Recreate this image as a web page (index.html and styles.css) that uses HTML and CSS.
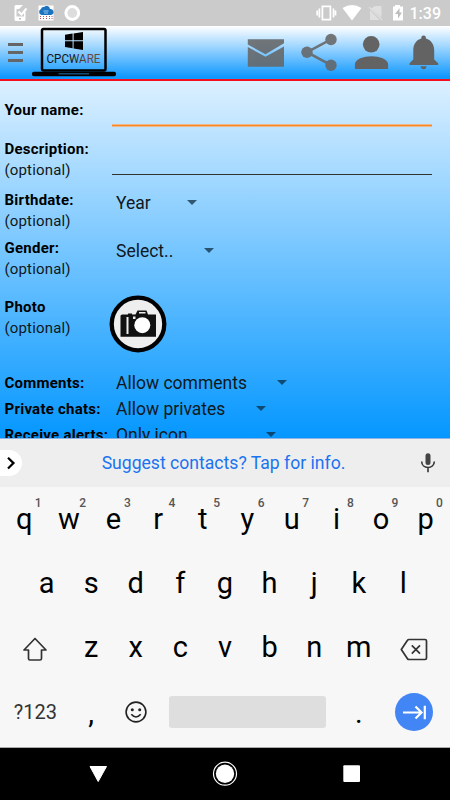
FILE: index.html
```html
<!DOCTYPE html>
<html lang="en">
<head>
<meta charset="utf-8">
<title>Profile</title>
<link rel="stylesheet" href="styles.css">
</head>
<body>
<div class="phone">
  <div class="status">
    <svg width="85" height="26" viewBox="0 0 85 26">
      <path fill="#fff" d="M16 5h7l-4 4h-2.500v7.500h7.500v-4l1.500-1.500v8.500q0 1.500-1.500 1.500h-8q-1.500 0-1.500-1.500v-13q0-1.500 1.500-1.500z"/>
      <path fill="none" stroke="#fff" stroke-width="2" d="M18.500 11.500l3 3 5-6"/>
      <path fill="#bbb" d="M19 18h2v1.500h-2z"/>
      <path fill="#fff" d="M38.500 5.500h15v15h-15z"/>
      <path fill="#1b73c0" d="M41.500 15a3.200 3.200 0 0 1-.5-6q.5-2.500 3-2a3.500 3.500 0 0 1 6 2 3 3 0 0 1 1 6z"/>
      <path stroke="#95c6e8" stroke-width="1" d="M43.500 11h5M44 13h4"/>
      <path fill="none" stroke="#b45b60" stroke-dasharray="1 1" d="M40.500 16v4M43.500 16v4M46.500 16v4M49.500 16v4M52 16v4"/>
      <circle cx="72.300" cy="13" r="6.400" fill="#ddd" stroke="#fff" stroke-width="3"/>
    </svg>
    <div class="status-right">
      <svg width="96" height="26" viewBox="312 0 96 26">
        <path fill="none" stroke="#fff" stroke-width="1.700" d="M322.400 6.400h8v13.200h-8zM319.400 8.500v9M317.200 10.500v5M333.500 8.500v9M335.500 10.500v5"/>
        <path fill="#fff" d="M342.500 8q9.500-6 19 0l-9.500 12.500z"/>
        <path fill="#dfdfdf" d="M375 6h6.500v11.500L371 8.500zM370 10l9.500 10H370z"/>
        <path stroke="#dfdfdf" stroke-width="1.300" d="M369 7l13 13"/>
        <path fill="#fff" d="M395 5h5v1.500h3v14H393v-14h2z"/>
        <path fill="#bdbdbd" d="M399.500 8l-4.500 6h3v4.500l4-6h-2.500z"/>
      </svg>
      <span class="clock">1:39</span>
    </div>
  </div>

  <header class="header">
    <div class="brand">
      <span class="burger"><i></i><i></i><i></i></span>
      <svg width="84" height="50" viewBox="32 27 84 50">
        <defs><linearGradient id="word"><stop offset=".45" stop-color="#151515"/><stop offset=".75" stop-color="#6b4a3c"/></linearGradient></defs>
        <rect x="42" y="29" width="63.500" height="41.500" rx="1.500" fill="none" stroke="#000" stroke-width="2.500"/>
        <path fill="#000" d="M65 34.800l7.600-1.200v6.700H65zM73.600 33.400l9.400-1.400v8.300h-9.400zM65 41.300h7.600V48.200L65 47zM73.600 41.300H83v8.600l-9.400-1.400z"/>
        <text class="logo-text" x="46.500" y="63.200" textLength="54" lengthAdjust="spacingAndGlyphs">CPCWARE</text>
        <rect x="32" y="71.700" width="84" height="4.600" rx="1.800"/>
        <rect x="58.500" y="73" width="30.500" height="1.500" fill="#164d72"/>
      </svg>
    </div>
    <svg width="202" height="52" viewBox="242 26 202 52">
      <g fill="#666" opacity=".88">
        <path d="M247.800 39.300H284v4L265.500 54.300 247.800 44.500zM247.800 47l17.700 9.800L284 46.500v20.300H247.800z"/>
        <path fill="none" stroke="#666" stroke-width="2.600" d="M331 39.300L307 52.200l24 13"/>
        <circle cx="331" cy="39.500" r="5.700"/><circle cx="307" cy="52.200" r="5.700"/><circle cx="331" cy="65.200" r="5.700"/>
      </g>
      <g fill="#636363">
        <circle cx="371.200" cy="44.300" r="8.300"/>
        <path d="M354.900 69v-4.500c0-5.500 9-8.300 16.600-8.300s16.600 2.800 16.600 8.300V69z"/>
        <path d="M409.500 65v-1.800l3.800-3.800v-9c0-6 3-10.500 8-11.800v-.8a2.300 2.300 0 0 1 4.600 0v.8c5 1.300 8.300 5.800 8.300 11.800v9l4 3.800V65zM420.500 66.200h6.200q-.5 3-3.100 3t-3.100-3z"/>
      </g>
    </svg>
  </header>

  <main class="form">
    <div class="row row-name"><div class="label"><b>Your name:</b></div><div class="input focus"></div></div>
    <div class="row row-desc"><div class="label"><b>Description:</b><span>(optional)</span></div><div class="input"></div></div>
    <div class="row row-birth"><div class="label"><b>Birthdate:</b><span>(optional)</span></div><div class="select w-year">Year<i class="caret"></i></div></div>
    <div class="row row-gender"><div class="label"><b>Gender:</b><span>(optional)</span></div><div class="select w-gender">Select..<i class="caret"></i></div></div>
    <div class="row row-photo"><div class="label"><b>Photo</b><span>(optional)</span></div>
      <svg class="camera" width="58" height="58" viewBox="0 0 58 58">
        <circle cx="29" cy="29" r="26.300" fill="#eee" stroke="#000" stroke-width="4.300"/>
        <path fill="#111" d="M13 19.500h6v-1h4v1h3.500l2-4h9l1.500 4h8v22.300H11.500V20.500z"/>
        <path fill="#eee" d="M30 17h6.500v1.500H30zM17.500 22h2v17h-2zM24 21.500h2.500v2.500H24z"/>
        <circle cx="33.300" cy="30.200" r="8" fill="#fff"/>
      </svg>
    </div>
    <div class="row row-line"><div class="label"><b>Comments:</b></div><div class="select w-comments">Allow comments<i class="caret"></i></div></div>
    <div class="row row-line"><div class="label"><b>Private chats:</b></div><div class="select w-private">Allow privates<i class="caret"></i></div></div>
    <div class="row row-line"><div class="label"><b>Receive alerts:</b></div><div class="select w-alerts">Only icon<i class="caret"></i></div></div>
  </main>

  <section class="keyboard">
    <div class="suggest">
      <span class="expand"><svg width="22" height="26" viewBox="0 0 22 26"><path fill="none" stroke="#000" stroke-width="2.200" d="M8 7.700l5.500 5.400L8 18.500"/></svg></span>
      <span class="tip">Suggest contacts? Tap for info.</span>
      <svg class="mic" width="16" height="20" viewBox="0 0 16 20"><rect x="5.500" y=".3" width="5" height="11.700" rx="2.500" fill="#444"/><path fill="none" stroke="#333" stroke-width="1.600" d="M1.700 8.500c0 8 12.600 8 12.600 0M8 14.500v4.700"/></svg>
    </div>
    <div class="keys">
      <div class="krow first">
        <span class="key">q<sup>1</sup></span><span class="key">w<sup>2</sup></span><span class="key">e<sup>3</sup></span><span class="key">r<sup>4</sup></span><span class="key">t<sup>5</sup></span><span class="key">y<sup>6</sup></span><span class="key">u<sup>7</sup></span><span class="key">i<sup>8</sup></span><span class="key">o<sup>9</sup></span><span class="key">p<sup>0</sup></span>
      </div>
      <div class="krow inset">
        <span class="key">a</span><span class="key">s</span><span class="key">d</span><span class="key">f</span><span class="key">g</span><span class="key">h</span><span class="key">j</span><span class="key">k</span><span class="key">l</span>
      </div>
      <div class="krow third">
        <span class="key wide"><svg class="shift" width="26" height="25" viewBox="0 0 26 25"><path fill="none" stroke="#333" stroke-width="1.700" stroke-linejoin="round" d="M13 1.500L24 13h-4.500v8.500q0 1.500-1.500 1.500H8q-1.500 0-1.500-1.500V13H2z"/></svg></span>
        <span class="key">z</span><span class="key">x</span><span class="key">c</span><span class="key">v</span><span class="key">b</span><span class="key">n</span><span class="key">m</span>
        <span class="key wide"><svg class="erase" width="28" height="23" viewBox="0 0 28 23"><path fill="none" stroke="#333" stroke-width="1.700" stroke-linejoin="round" d="M9 1.500h16q1.500 0 1.500 1.500v17q0 1.500-1.500 1.500H9q-1 0-1.500-.8L1.300 11.500 7.500 2.300Q8 1.500 9 1.500zM11.800 7.300l8.200 8.400M20 7.300l-8.200 8.400"/></svg></span>
      </div>
      <div class="krow last">
        <span class="key wide sym">?123</span>
        <span class="key punct">,</span>
        <span class="key"><svg width="22" height="22" viewBox="0 0 22 22"><circle cx="11" cy="11" r="9.900" fill="none" stroke="#222" stroke-width="1.600"/><circle cx="7.300" cy="8.800" r="1.500" fill="#222"/><circle cx="14.700" cy="8.800" r="1.500" fill="#222"/><path fill="none" stroke="#222" stroke-width="1.600" d="M6.300 13.200q4.700 5.500 9.400 0"/></svg></span>
        <span class="spacebar"><i></i></span>
        <span class="key punct">.</span>
        <span class="key wide"><svg width="38" height="38" viewBox="0 0 38 38"><circle cx="19" cy="19" r="19" fill="#4285f4"/><path fill="none" stroke="#fff" stroke-width="2.200" d="M8 19.500h18M20.500 13.500l6 6-6 6M29.800 12.800v13.400"/></svg></span>
      </div>
    </div>
  </section>

  <nav class="nav">
    <svg width="450" height="52" viewBox="0 0 450 52">
      <path fill="#fff" stroke="#fff" stroke-linejoin="round" d="M90 18.500h16.500l-8.300 15z"/>
      <circle cx="225" cy="25.700" r="11.500" fill="none" stroke="#fff" stroke-width="1.200"/>
      <circle cx="225" cy="25.700" r="9.200" fill="#fff"/>
      <rect x="343.300" y="17.300" width="16.700" height="16.700" rx="1" fill="#fff"/>
    </svg>
  </nav>
</div>
</body>
</html>
```

FILE: styles.css
```css
* { box-sizing: border-box; }
body { margin: 0; font-family: Roboto, "Liberation Sans", sans-serif; color: #101820; }
svg { display: block; flex: none; }
.phone { width: 450px; height: 800px; overflow: hidden; display: flex; flex-direction: column; }

.status { height: 26px; flex: none; background: #cbcbcb; display: flex; justify-content: space-between; }
.status-right { display: flex; align-items: center; padding-right: 9px; }
.clock { color: #fff; font-size: 16px; font-weight: 500; line-height: 26px; width: 33px; text-align: right; padding-top: 2px; white-space: nowrap; }

.header { height: 55px; flex: none; display: flex; justify-content: space-between; padding: 0 6px 0 8px; background: linear-gradient(#fff, #1199ff 96%); border-bottom: 2px solid #f50f1e; }
.brand { display: flex; gap: 9px; padding-top: 1px; }
.burger { width: 15px; display: flex; flex-direction: column; gap: 5px; padding-top: 16px; }
.burger i { height: 3px; background: #666; }
.logo-text { font: 400 12.500px Roboto, sans-serif; fill: url(#word); }

.form { height: 357px; flex: none; overflow: hidden; background: linear-gradient(#dcf0ff, #0597ff); }
.row { display: flex; padding-left: 4px; }
.label { width: 108px; flex: none; display: flex; flex-direction: column; font-size: 15px; line-height: 21px; letter-spacing: .17px; padding-left: .5px; white-space: nowrap; }
.label b { font-weight: 700; color: #000; letter-spacing: .25px; }
.input { width: 320px; border-bottom: 1px solid #333; }
.input.focus { border-bottom: 1px solid #fa8c1e; box-shadow: 0 1px #f0b48c, inset 0 -1px #f0b48c; }
.row-name { height: 58px; padding-top: 19px; }
.row-name .input { height: 26px; }
.row-desc { height: 51px; }
.row-desc .input { height: 36px; }
.row-birth { height: 48px; }
.row-gender { height: 59px; }
.row-photo { height: 75px; }
.row-line { height: 26px; }
.select { margin-left: 4px; display: flex; align-items: center; justify-content: space-between; height: 26px; font-size: 17.500px; white-space: nowrap; }
.caret { border: 5.500px solid transparent; border-top-color: rgba(10, 40, 60, .72); border-bottom: 0; margin-bottom: 2px; }
.w-year { width: 81px; }
.w-gender { width: 98px; }
.w-comments { width: 171px; }
.w-private { width: 150px; }
.w-alerts { width: 160px; }
.row-line .label { padding-top: .5px; }
.row-line .select { height: 22px; }
.camera { margin: -2px 0 0 -3.500px; }

.keyboard { height: 310px; flex: none; background: #f7f7f7; border-bottom: 1px solid #aaa; }
.suggest { height: 49px; background: #eee; border-top: 1px solid #8ab4e8; display: flex; align-items: center; }
.expand { width: 22px; height: 26px; background: #fff; border-radius: 0 13px 13px 0; }
.tip { flex: 1; text-align: center; color: #1a73f0; font-size: 17.600px; padding-right: 4px; padding-left: 9px; white-space: nowrap; }
.mic { margin-right: 14px; }
.keys { padding: 0 2px; }
.krow { height: 64.400px; display: flex; }
.krow.first { height: 63.400px; }
.krow.inset { padding: 0 22.300px; }
.krow.third { height: 65px; }
.key { width: 44.600px; flex: none; position: relative; display: flex; justify-content: center; align-items: center; font-size: 29px; color: #000; }
.key sup { position: absolute; right: 5px; top: 9px; font-size: 12px; font-weight: 500; line-height: 14px; color: #555; }
.key.wide { width: 66.900px; }
.shift, .erase { margin-top: 4px; }
.key.sym { font-size: 20px; color: #333; }
.key.punct { padding-top: 2px; }
.last .key.wide:last-child { padding-right: 1px; }
.spacebar { width: 178.400px; display: flex; align-items: center; justify-content: center; }
.spacebar i { width: 157px; height: 32px; border-radius: 3px; background: #dedede; }
.nav { height: 52px; flex: none; background: #000; }
```
